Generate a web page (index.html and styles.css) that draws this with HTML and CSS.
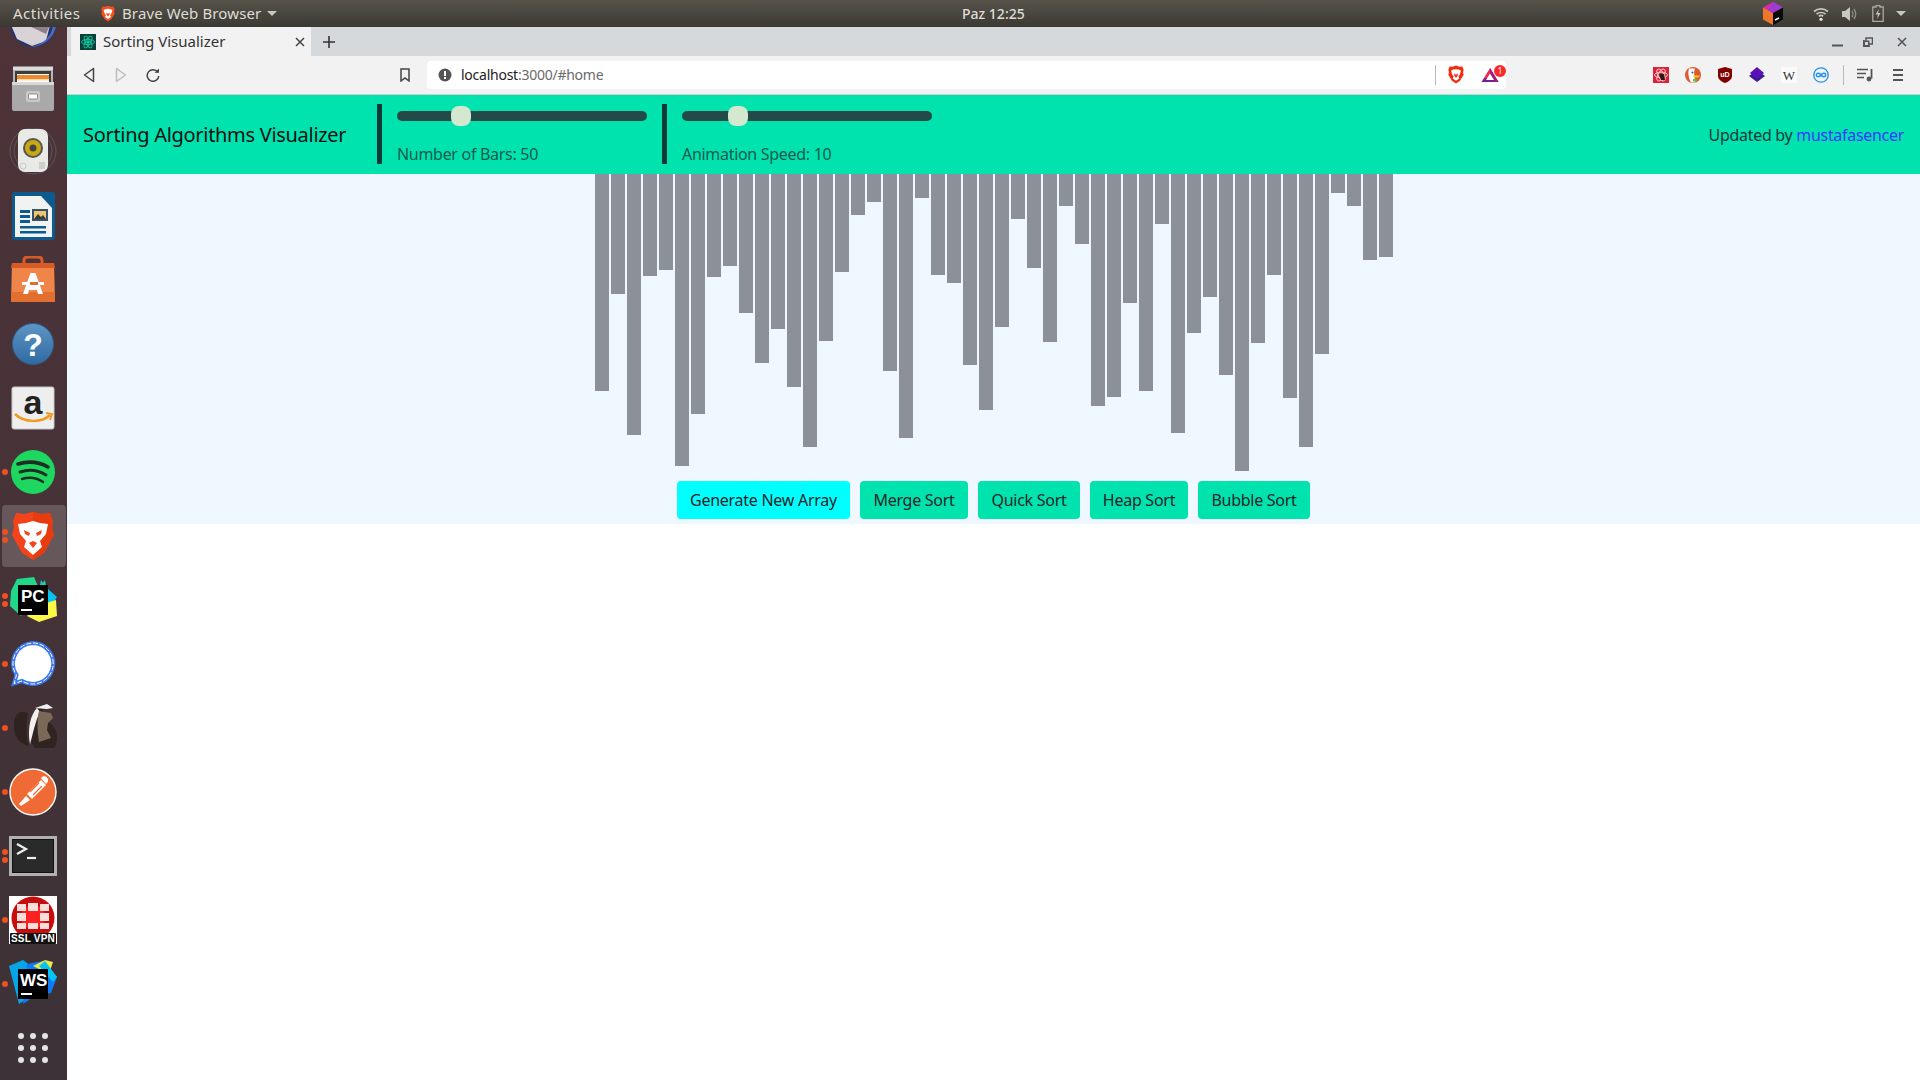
FILE: index.html
```html
<!DOCTYPE html>
<html lang="tr">
<head>
<meta charset="utf-8">
<title>Sorting Visualizer</title>
<link rel="stylesheet" href="styles.css">
</head>
<body>
<header class="sysbar">
  <span class="sys-activities">Activities</span>
  <svg class="sys-brave" width="14" height="17" viewBox="0 0 48 56"><path d="M24 1 34 5 43 4 47 14 45 22 47 29 36 47 24 55 12 47 1 29 3 22 1 14 5 4 14 5Z" fill="#f4511e"/><path d="M24 12 32 13 39 16 36 27 31 33 34 40 24 47 14 40 17 33 12 27 9 16 16 13Z" fill="#fff"/><path d="M18 24 22 28 26 28 30 24 29 32 24 38 19 32Z" fill="#f4511e"/></svg>
  <span class="sys-app">Brave Web Browser</span>
  <span class="sys-caret"></span>
  <span class="sys-clock">Paz 12:25</span>
  <svg class="sys-cube" width="20" height="23" viewBox="0 0 20 23"><path d="M10 0 20 5.5 10 11 0 5.5Z" fill="#d72ca8"/><path d="M0 5.5 10 11V23L0 17.5Z" fill="#f0762c"/><path d="M10 0 20 5.5 10 11 5 8Z" fill="#a03ad0"/><path d="M10 11 20 5.5V17.5L10 23Z" fill="#0a0a0a"/><path d="M12 18 16 16" stroke="#fff" stroke-width="1.4"/></svg>
  <svg class="sys-wifi" width="16" height="16" viewBox="0 0 16 16" fill="none" stroke="#c9c7c0" stroke-width="1.7"><path d="M1 5.5C5 2 11 2 15 5.5"/><path d="M3.5 8C6 6 10 6 12.5 8"/><path d="M5.8 10.3C7 9.4 9 9.4 10.2 10.3"/><circle cx="8" cy="13.3" r="1.6" fill="#e4e2dc" stroke="none"/></svg>
  <svg class="sys-vol" width="17" height="16" viewBox="0 0 17 16" fill="none"><path d="M1 5H4L9 1V15L4 11H1Z" fill="#c9c7c0"/><path d="M11 5C12 6.5 12 9.5 11 11M13 3C15 6 15 10 13 13" stroke="#8f8d86" stroke-width="1.4"/></svg>
  <svg class="sys-batt" width="12" height="17" viewBox="0 0 12 17" fill="none"><path d="M4 .5H8V2H11.2V16.4H.8V2H4Z" stroke="#aaa8a1" stroke-width="1.3"/><path d="M7 4 3.5 9.5H6L5 14 8.5 8H6Z" fill="#c9c7c0"/></svg>
  <span class="sys-caret sys-caret-end"></span>
</header>

<div class="desktop">
  <nav class="dock">
    <div class="dock-item"><svg width="48" height="48" viewBox="0 0 48 48"><circle cx="24" cy="24" r="23" fill="#26346f"/><path d="M2 25H41L37 41 23 46 8 39Z" fill="#d9d2d6"/><path d="M18 25H41L37 34Z" fill="#8e7f8a"/><path d="M44 25C43 36 34 45 22 47 33 47 46 38 47 25Z" fill="#4a6cc0"/></svg></div>
    <div class="dock-item"><svg width="48" height="48" viewBox="0 0 48 48"><path d="M4 3H44V44H4Z" fill="#b5b5b5"/><path d="M4 2.500H44V6H4Z" fill="#dcdcdc"/><path d="M6 7H42V18H6Z" fill="#3c3c3c"/><path d="M8 10H40V18H8Z" fill="#fff"/><path d="M8 11H40V15H8Z" fill="#ef8a2d"/><path d="M8 15H40V16.500H8Z" fill="#fbd9a6"/><path d="M3 19H45V45C45 46 44 47 43 47H5C4 47 3 46 3 45Z" fill="#a9a9a9"/><path d="M3 18H45V21H3Z" fill="#d8d8d8"/><rect x="17" y="27" width="14" height="11" rx="2" fill="#c9c9c9"/><rect x="19.500" y="30" width="9" height="5" rx="1" fill="#fff" stroke="#666" stroke-width=".7"/></svg></div>
    <div class="dock-item"><svg width="48" height="48" viewBox="0 0 48 48" fill="none"><circle cx="24" cy="23" r="23" stroke="#5b5560" stroke-width="1"/><circle cx="24" cy="23" r="19" stroke="#5b5560" stroke-width="1"/><rect x="9" y="1" width="30" height="43" rx="7" fill="#e9e9e5"/><circle cx="24" cy="20" r="10" fill="#555"/><circle cx="24" cy="20" r="8" fill="#c9a912"/><circle cx="24" cy="20" r="3.500" fill="#444"/><circle cx="14" cy="38" r="3" stroke="#c9c9c5"/><path d="M30 34H36V41H30Z" fill="#cfcfca"/></svg></div>
    <div class="dock-item"><svg width="48" height="48" viewBox="0 0 48 48"><path d="M6 0H44C45 0 46 1 46 2V44C46 47 45 48 42 48H6C4 48 3 47 3 45V3C3 1 4 0 6 0Z" fill="#0c5a8e"/><path d="M6 4H32L43 16V45H6Z" fill="#f1f2f2"/><path d="M33 1H45V14Z" fill="#0c5a8e"/><path d="M11 18H21V21H11ZM11 23H21V26H11ZM11 28H21V31H11ZM11 34H37V36.500H11ZM11 39H37V41.500H11Z" fill="#0c5a8e"/><path d="M23 17H39V29H23Z" fill="#36536b"/><path d="M25 19H37V27H25Z" fill="#eec96a"/><path d="M25 27 29 22 32 25 34 23 37 27Z" fill="#3b3b3b"/></svg></div>
    <div class="dock-item"><svg width="48" height="48" viewBox="0 0 48 48"><path d="M3 7H45L46 46H2Z" fill="#ef8548"/><path d="M2 36H46V46H2Z" fill="#e26f30"/><path d="M3 7H45L46 12H2Z" fill="#d85b26"/><path d="M15 11V4C15 2 17 1 19 1H29C31 1 33 2 33 4V11" fill="none" stroke="#d85b26" stroke-width="3"/><path d="M21.500 17H26.500L34 38H29L28 34H20L19 38H14Z" fill="#fff"/><path d="M13 26H35V29H13Z" fill="#fff"/><path d="M21 26H29V29H21Z" fill="#e26f30"/></svg></div>
    <div class="dock-item"><svg width="48" height="48" viewBox="0 0 48 48"><defs><linearGradient id="helpfill" x1="0" y1="0" x2="0" y2="1"><stop offset="0" stop-color="#5e95c6"/><stop offset="1" stop-color="#2f6aa0"/></linearGradient></defs><circle cx="24" cy="24" r="20.500" fill="url(#helpfill)" stroke="#2d5f90" stroke-width="1"/><text class="dock-help" x="24" y="36" text-anchor="middle">?</text></svg></div>
    <div class="dock-item"><svg width="48" height="48" viewBox="0 0 48 48"><rect x="3" y="3" width="42" height="42" rx="2" fill="#eeeeee" stroke="#c8c8c8"/><text class="dock-amazon" x="24" y="30" text-anchor="middle">a</text><path d="M6 30C15 39 33 39 41 31" fill="none" stroke="#f29a1f" stroke-width="2.500"/><path d="M37 29 43 30 41 36" fill="none" stroke="#f29a1f" stroke-width="2"/></svg></div>
    <div class="dock-item"><span class="run-dot"></span><svg width="48" height="48" viewBox="0 0 48 48" fill="none" stroke="#1f2d22" stroke-linecap="round"><circle cx="24" cy="24" r="22" fill="#1ed760" stroke="none"/><path d="M9 16C19 13 30 14 39 19" stroke-width="3.600"/><path d="M11 24C20 21 29 22 37 27" stroke-width="3"/><path d="M13 31C20 29 28 30 34 34" stroke-width="2.500"/></svg></div>
    <div class="dock-item dock-active"><span class="run-dot run-dot-a"></span><span class="run-dot run-dot-b"></span><svg width="48" height="48" viewBox="0 0 48 48"><path d="M24 0 33 2 41 1 44 9 43 16 45 23 35 41 24 48 13 41 3 23 5 16 4 9 7 1 15 2Z" fill="#f4421a"/><path d="M24 48 35 41 45 23 43 16 44 9 41 1 33 2 24 0Z" fill="#e73c10"/><path d="M24 9 31 11 39 12 37 22 31 29 33 35 24 43 15 35 17 29 11 22 9 12 17 11Z" fill="#fff"/><path d="M15 18 21 21 20 24 16 22ZM33 18 27 21 28 24 32 22ZM20 31 24 29 28 31 24 36Z" fill="#f4421a"/></svg></div>
    <div class="dock-item"><span class="run-dot run-dot-a"></span><span class="run-dot run-dot-b"></span><svg width="48" height="48" viewBox="0 0 48 48"><path d="M8 3 25 1 31 15 12 40 1 30 2 15Z" fill="#21d789"/><path d="M32 4 40 14 48 21 40 34 29 18Z" fill="#07c3f2"/><path d="M30 12 36 4 40 30 22 28Z" fill="#21d789"/><path d="M28 30 47 24 48 40 30 46 18 40Z" fill="#fcf84a"/><rect x="9" y="9" width="30" height="30" fill="#000"/><text class="dock-jb" x="12" y="26">PC</text><rect x="12" y="33" width="11" height="2" fill="#fff"/></svg></div>
    <div class="dock-item"><span class="run-dot"></span><svg width="48" height="48" viewBox="0 0 48 48" fill="none"><path d="M24 3A20.500 20.500 0 1 1 13 41L5 43.500 7.500 35A20.500 20.500 0 0 1 24 3Z" fill="#fff" stroke="#3a76f0" stroke-width="4"/><path d="M24 3A20.500 20.500 0 1 1 13 41L5 43.500 7.500 35A20.500 20.500 0 0 1 24 3Z" stroke="#fff" stroke-width="1" stroke-dasharray="5 1.800"/></svg></div>
    <div class="dock-item"><span class="run-dot"></span><svg width="48" height="48" viewBox="0 0 48 48"><path d="M13 8C5 8 4 20 6 30 8 36 14 41 20 42 16 30 18 16 19 10 17 8 15 8 13 8Z" fill="#30231f"/><path d="M33 4C25 4 22 12 22 22 19 30 21 38 26 44H46L48 36C49 28 45 22 40 18Z" fill="#2f2420"/><path d="M28 4C22 10 18 24 21 40 24 30 26 18 31 8Z" fill="#f1f0ee"/><path d="M30 7 42 9 44 14 39 19 38 26 42 34 30 38C28 26 28 14 30 7Z" fill="#7a6958"/><path d="M26 4 38 0 44 4 38 5Z" fill="#f2f2f2"/></svg></div>
    <div class="dock-item"><span class="run-dot"></span><svg width="48" height="48" viewBox="0 0 48 48"><circle cx="24" cy="24" r="23" fill="#f06a35" stroke="#fff" stroke-width="1.400"/><path d="M10 36 17 28 21 32 12 38Z" fill="#fff"/><path d="M18 26 32 12 37 17 23 31Z" fill="#fff"/><path d="M32 10C34 7 39 8 39 12 39 14 38 15 37 16Z" fill="#fff"/><path d="M21 24 30 15M24 27 33 18" stroke="#f06a35" stroke-width="1.200"/></svg></div>
    <div class="dock-item"><span class="run-dot run-dot-a"></span><span class="run-dot run-dot-b"></span><svg width="48" height="48" viewBox="0 0 48 48" fill="none"><rect x="1.500" y="5.500" width="45" height="37" fill="#2d2d2d" stroke="#b0b0b0" stroke-width="3"/><rect x="3.500" y="7.500" width="41" height="33" fill="#2a2a2a" stroke="#111" stroke-width="1"/><path d="M8 12 17 17 8 22" stroke="#eee" stroke-width="2.200"/><path d="M18 26H27" stroke="#eee" stroke-width="2.200"/></svg></div>
    <div class="dock-item"><span class="run-dot"></span><svg width="48" height="48" viewBox="0 0 48 48"><rect width="48" height="48" fill="#fff"/><circle cx="24" cy="22" r="21.500" fill="#c80d0d"/><circle cx="24" cy="21" r="12" fill="#ff2020"/><path d="M8 8H17V15H8ZM19 7H29V15H19ZM31 8H40V15H31ZM8 17H17V25H8ZM31 17H40V25H31ZM8 27H17V33H8ZM19 27H29V33H19ZM31 27H40V33H31Z" fill="#f9dedb"/><rect x="1" y="37" width="46" height="11" rx="1" fill="#111"/><text class="dock-ssl" x="24" y="46.300" text-anchor="middle">SSL VPN</text></svg></div>
    <div class="dock-item"><span class="run-dot"></span><svg width="48" height="48" viewBox="0 0 48 48"><path d="M0 6 14 0 22 6 16 40 10 44Z" fill="#07a5e8"/><path d="M18 4 34 1 48 17 42 33 26 36 14 44Z" fill="#0d7bf7"/><path d="M24 6 36 0 44 2 40 14Z" fill="#e9e94a"/><path d="M36 1 48 17 44 22 30 6Z" fill="#07c3f2"/><rect x="9" y="9" width="30" height="30" fill="#000"/><text class="dock-jb" x="11" y="26">WS</text><rect x="12" y="33" width="11" height="2" fill="#fff"/></svg></div>
    <div class="dock-item"><svg width="48" height="48" viewBox="0 0 48 48" fill="#e6e3e3"><circle cx="12" cy="12" r="3"/><circle cx="24" cy="12" r="3"/><circle cx="36" cy="12" r="3"/><circle cx="12" cy="24" r="3"/><circle cx="24" cy="24" r="3"/><circle cx="36" cy="24" r="3"/><circle cx="12" cy="36" r="3"/><circle cx="24" cy="36" r="3"/><circle cx="36" cy="36" r="3"/></svg></div>
  </nav>

  <div class="browser">
    <div class="tabstrip">
      <div class="tab">
        <svg width="16" height="16" viewBox="0 0 16 16" fill="none" stroke="#12c99b" stroke-width=".9"><rect width="16" height="16" fill="#0b3f3c" stroke="none"/><ellipse cx="8" cy="8" rx="6.500" ry="2.600"/><ellipse cx="8" cy="8" rx="6.500" ry="2.600" transform="rotate(60 8 8)"/><ellipse cx="8" cy="8" rx="6.500" ry="2.600" transform="rotate(120 8 8)"/><circle cx="8" cy="8" r="1.300" fill="#12c99b"/></svg>
        <span class="tab-title">Sorting Visualizer</span>
        <svg class="tab-close" width="10" height="10" viewBox="0 0 10 10"><path d="M1 1 9 9M9 1 1 9" stroke="#444" stroke-width="1.500"/></svg>
      </div>
      <svg class="tab-new" width="12" height="12" viewBox="0 0 12 12"><path d="M6 0V12M0 6H12" stroke="#333" stroke-width="1.600"/></svg>
      <div class="winctl">
        <svg width="11" height="10" viewBox="0 0 11 10"><path d="M0 8.500H11" stroke="#555" stroke-width="2"/></svg>
        <svg class="win-restore" width="10" height="10" viewBox="0 0 10 10" fill="none"><path d="M3 1H9.500V7H3Z" stroke="#555" stroke-width="1.500"/><path d="M.8 3V9.200H7" stroke="#555" stroke-width="1.500"/><rect x=".5" y="3.500" width="6" height="6" fill="#555"/><rect x="2" y="5" width="3" height="3" fill="#d5d9dc"/></svg>
        <svg width="10" height="10" viewBox="0 0 10 10"><path d="M1 1 9 9M9 1 1 9" stroke="#555" stroke-width="1.600"/></svg>
      </div>
    </div>

    <div class="toolbar">
      <span class="tool"><svg width="12" height="16" viewBox="0 0 12 16" fill="none"><path d="M10.500 1.500V14.500L1.500 8Z" stroke="#444" stroke-width="1.500" stroke-linejoin="round"/></svg></span>
      <span class="tool"><svg width="12" height="16" viewBox="0 0 12 16" fill="none"><path d="M1.500 1.500V14.500L10.500 8Z" stroke="#bcbcbc" stroke-width="1.500" stroke-linejoin="round"/></svg></span>
      <span class="tool"><svg width="14" height="14" viewBox="0 0 14 14" fill="none"><path d="M11.800 4.200A5.800 5.800 0 1 0 12.800 8" stroke="#444" stroke-width="1.500"/><path d="M8.500 4.800H13V.5Z" fill="#444"/></svg></span>
      <span class="tool tool-bookmark"><svg width="10" height="14" viewBox="0 0 10 14" fill="none"><path d="M1 1H9V13L5 10 1 13Z" stroke="#444" stroke-width="1.500"/></svg></span>
      <div class="urlbar">
        <svg width="14" height="14" viewBox="0 0 14 14"><circle cx="7" cy="7" r="6.500" fill="#555"/><rect x="6" y="3" width="2" height="5" fill="#fff"/><rect x="6" y="9" width="2" height="2" fill="#fff"/></svg>
        <span class="url-text"><span class="url-host">localhost</span>:3000/#home</span>
        <span class="url-sep"></span>
        <svg class="url-brave" width="16" height="19" viewBox="0 0 48 56"><path d="M24 1 34 5 43 4 47 14 45 22 47 29 36 47 24 55 12 47 1 29 3 22 1 14 5 4 14 5Z" fill="#f5290f"/><path d="M24 12 32 13 39 16 36 27 31 33 34 40 24 47 14 40 17 33 12 27 9 16 16 13Z" fill="#fff"/><path d="M18 24 22 28 26 28 30 24 29 32 24 38 19 32Z" fill="#f5290f"/></svg>
        <span class="url-bat">
          <svg width="18" height="16" viewBox="0 0 18 16"><path d="M9 1 17.500 15H.5Z" fill="#f02a4f"/><path d="M.5 15H17.500L14 11H4Z" fill="#6e1f9a"/><path d="M9 1 17.500 15H13L9 7Z" fill="#a01a7a"/><path d="M9 6.500 13 13H5Z" fill="#fff"/></svg>
          <span class="bat-badge">1</span>
        </span>
      </div>
      <div class="exts">
        <span class="ext"><svg width="16" height="16" viewBox="0 0 16 16" fill="none"><rect width="16" height="16" fill="#dc2036"/><ellipse cx="8" cy="8" rx="6.500" ry="2.800" stroke="#f9c4c9"/><ellipse cx="8" cy="8" rx="6.500" ry="2.800" stroke="#f9c4c9" transform="rotate(60 8 8)"/><ellipse cx="8" cy="8" rx="6.500" ry="2.800" stroke="#f9c4c9" transform="rotate(120 8 8)"/><path d="M6 7H11L12 13H8Z" fill="#2a1a1a"/></svg></span>
        <span class="ext"><svg width="16" height="16" viewBox="0 0 16 16"><circle cx="8" cy="8" r="8" fill="#de5833"/><path d="M4 1.500C3 5 3 10 6 15.500H10.500L9.500 9.500C9 6 9 4 10 1.500Z" fill="#fff"/><path d="M8 8.500H15L13.500 10.500H9Z" fill="#fdd20a"/><path d="M8 12H12V14.500H8Z" fill="#65bc46"/><circle cx="7.500" cy="5.500" r="1" fill="#2d4f8e"/></svg></span>
        <span class="ext"><svg width="14" height="16" viewBox="0 0 14 16"><path d="M0 2 7 0 14 2V9C14 12 11 14.500 7 16 3 14.500 0 12 0 9Z" fill="#800000"/><text class="ext-ub" x="7" y="10" text-anchor="middle">uD</text></svg></span>
        <span class="ext"><svg width="16" height="16" viewBox="0 0 16 16"><path d="M8 3 16 9 8 15 0 9Z" fill="#3c1a90"/><path d="M8 0 15 6 8 12 1 6Z" fill="#5a10b8"/></svg></span>
        <span class="ext"><span class="ext-wiki">W</span></span>
        <span class="ext"><svg width="16" height="16" viewBox="0 0 16 16" fill="none" stroke="#1e90f0"><circle cx="8" cy="8" r="7.200" stroke-width="1.300"/><path d="M8 8C6.500 5.800 3.300 5.800 3.300 8S6.500 10.200 8 8C9.500 5.800 12.700 5.800 12.700 8S9.500 10.200 8 8Z" stroke-width="1.500"/></svg></span>
      </div>
      <span class="tool-sep"></span>
      <span class="tool tool-queue"><svg width="16" height="14" viewBox="0 0 16 14" fill="none" stroke="#555" stroke-width="1.500"><path d="M0 1.500H11M0 5.500H9M0 9.500H7"/><path d="M14.500 1V10.500" stroke-width="1.800"/><circle cx="12" cy="11" r="2.400" fill="#555" stroke="none"/></svg></span>
      <span class="tool tool-menu"><svg width="10" height="12" viewBox="0 0 10 12"><path d="M0 1H10M0 6H10M0 11H10" stroke="#555" stroke-width="1.800"/></svg></span>
    </div>

    <main class="page">
      <div class="navbar">
        <span class="brand">Sorting Algorithms Visualizer</span>
        <div class="control control-bars">
          <div class="track"><span class="thumb thumb-bars"></span></div>
          <label class="control-label">Number of Bars: 50</label>
        </div>
        <div class="control control-speed">
          <div class="track"><span class="thumb thumb-speed"></span></div>
          <label class="control-label">Animation Speed: 10</label>
        </div>
        <span class="credit">Updated by <a class="credit-link" href="#home">mustafasencer</a></span>
      </div>
      <section class="stage">
        <div class="bars">
          <div class="bar" style="height:217px"></div><div class="bar" style="height:120px"></div><div class="bar" style="height:261px"></div><div class="bar" style="height:102px"></div><div class="bar" style="height:96px"></div>
          <div class="bar" style="height:292px"></div><div class="bar" style="height:240px"></div><div class="bar" style="height:103px"></div><div class="bar" style="height:92px"></div><div class="bar" style="height:139px"></div>
          <div class="bar" style="height:189px"></div><div class="bar" style="height:155px"></div><div class="bar" style="height:213px"></div><div class="bar" style="height:273px"></div><div class="bar" style="height:167px"></div>
          <div class="bar" style="height:98px"></div><div class="bar" style="height:41px"></div><div class="bar" style="height:28px"></div><div class="bar" style="height:197px"></div><div class="bar" style="height:264px"></div>
          <div class="bar" style="height:24px"></div><div class="bar" style="height:101px"></div><div class="bar" style="height:109px"></div><div class="bar" style="height:191px"></div><div class="bar" style="height:236px"></div>
          <div class="bar" style="height:153px"></div><div class="bar" style="height:45px"></div><div class="bar" style="height:94px"></div><div class="bar" style="height:168px"></div><div class="bar" style="height:32px"></div>
          <div class="bar" style="height:70px"></div><div class="bar" style="height:232px"></div><div class="bar" style="height:223px"></div><div class="bar" style="height:129px"></div><div class="bar" style="height:217px"></div>
          <div class="bar" style="height:50px"></div><div class="bar" style="height:259px"></div><div class="bar" style="height:159px"></div><div class="bar" style="height:123px"></div><div class="bar" style="height:201px"></div>
          <div class="bar" style="height:297px"></div><div class="bar" style="height:169px"></div><div class="bar" style="height:101px"></div><div class="bar" style="height:224px"></div><div class="bar" style="height:273px"></div>
          <div class="bar" style="height:180px"></div><div class="bar" style="height:19px"></div><div class="bar" style="height:32px"></div><div class="bar" style="height:86px"></div><div class="bar" style="height:83px"></div>
        </div>
        <div class="actions">
          <button class="btn btn-generate">Generate New Array</button>
          <button class="btn btn-merge">Merge Sort</button>
          <button class="btn btn-quick">Quick Sort</button>
          <button class="btn btn-heap">Heap Sort</button>
          <button class="btn btn-bubble">Bubble Sort</button>
        </div>
      </section>
    </main>
  </div>
</div>
</body>
</html>
```
FILE: styles.css
```css
* { box-sizing: border-box; }
html, body { margin: 0; padding: 0; height: 100%; overflow: hidden; }
body { font-family: "Noto Sans", sans-serif; background: #fff; color: #212529; display: flex; flex-direction: column; height: 1080px; }

/* system bar */
.sysbar { flex: none; height: 27px; display: flex; align-items: center; background: linear-gradient(#57534b, #3b3933); color: #dfdcd6; font-size: 15px; padding-left: 13px; }
.sys-activities { width: 88px; margin-bottom: 2px; letter-spacing: .5px; }
.sys-brave { flex: none; }
.sys-app { margin-left: 7px; width: 145px; margin-bottom: 2px; letter-spacing: .12px; white-space: nowrap; }
.sys-caret { width: 0; height: 0; border-left: 5px solid transparent; border-right: 5px solid transparent; border-top: 5px solid #c9c7c0; }
.sys-clock { margin-left: 685px; width: 63px; font-size: 14px; font-weight: 500; white-space: nowrap; }
.sys-cube { margin-left: 738px; flex: none; }
.sys-wifi { margin-left: 30px; flex: none; }
.sys-vol { margin-left: 12px; flex: none; }
.sys-batt { margin-left: 14px; flex: none; }
.sys-caret-end { margin-left: 12px; }

/* desktop */
.desktop { flex: 1; display: flex; min-height: 0; }
.dock { flex: none; width: 67px; display: flex; flex-direction: column; justify-content: flex-end; padding-bottom: 1px; overflow: hidden; background: linear-gradient(#4e3338, #3c3237); }
.dock-item { position: relative; flex: none; height: 64px; display: flex; align-items: center; justify-content: center; padding: 2px 2px 0 0; }
.dock-active { height: 62px; margin: 2px 1px 0 2px; padding-top: 0; border-radius: 4px; background: rgba(255,255,255,.18); }
.run-dot { position: absolute; left: 2px; top: 30px; width: 6px; height: 6px; border-radius: 50%; background: #ee5020; }
.run-dot-a { top: 26px; }
.run-dot-b { top: 34px; }
.dock-active .run-dot { left: 0; }
.dock-active .run-dot-a { top: 24px; }
.dock-active .run-dot-b { top: 32px; }
.dock-help { font: 700 32px "Liberation Sans", sans-serif; fill: #fff; }
.dock-amazon { font: 700 34px "Liberation Sans", sans-serif; fill: #222; }
.dock-jb { font: 700 17px "Liberation Sans", sans-serif; fill: #fff; }
.dock-ssl { font: 700 10px "Liberation Sans", sans-serif; letter-spacing: .2px; fill: #fff; }

/* browser */
.browser { flex: 1; min-width: 0; display: flex; flex-direction: column; }
.tabstrip { flex: none; height: 29px; display: flex; align-items: center; background: #d5d9dc; padding-left: 4px; }
.tab { width: 240px; height: 29px; display: flex; align-items: center; background: #f2f2f2; padding-left: 9px; }
.tab-title { margin: 0 0 1px 7px; font-size: 15px; color: #333; white-space: nowrap; width: 192px; }
.tab-close { flex: none; }
.tab-new { margin-left: 12px; flex: none; }
.winctl { margin-left: auto; display: flex; align-items: center; gap: 21.500px; padding-right: 13px; }
.win-restore { margin: 0 2.400px 0 -1.200px; }

.toolbar { flex: none; height: 39px; display: flex; align-items: center; background: #f2f2f2; border-bottom: 1px solid #cfcfcf; padding: 0 0 1px 6px; }
.tool { flex: none; width: 32px; height: 28px; display: flex; align-items: center; justify-content: center; }
.tool-bookmark { margin-left: 220px; }
.urlbar { flex: none; width: 1079px; height: 28px; margin-left: 6px; background: #fff; border-radius: 4px; display: flex; align-items: center; padding-left: 11px; }
.url-text { margin-left: 9px; font-size: 14px; letter-spacing: -.25px; color: #6b6b6b; width: 974px; white-space: nowrap; }
.url-host { color: #222; }
.url-sep { flex: none; width: 1px; height: 20px; background: #b9b9b9; }
.url-brave { margin-left: 12px; flex: none; }
.url-bat { position: relative; margin-left: 17px; display: flex; }
.bat-badge { position: absolute; left: 13px; top: -2px; width: 12px; height: 12px; border-radius: 50%; background: #fb2a2a; color: #fff; font-size: 8px; line-height: 12px; text-align: center; }
.exts { flex: none; margin-left: 139px; display: flex; }
.ext { flex: none; width: 32px; height: 28px; display: flex; align-items: center; justify-content: center; }
.ext-ub { font: 700 7px "Liberation Sans", sans-serif; fill: #fff; }
.ext-wiki { width: 16px; height: 16px; background: #fafafa; text-align: center; font: 13px/17px "Liberation Serif", serif; color: #333; }
.tool-sep { flex: none; width: 1px; height: 20px; margin-left: 6px; background: #b9b9b9; }
.tool-queue { margin-left: 5px; }
.tool-menu { margin-left: 1px; }

/* page */
.page { flex: none; height: 429px; display: flex; flex-direction: column; background: #f0f8ff; }
.navbar { flex: none; height: 79px; display: flex; align-items: flex-start; background: #00e3ae; padding-left: 16px; }
.brand { width: 294px; margin-top: 27px; font-size: 20px; line-height: 26px; letter-spacing: -.3px; color: #111; white-space: nowrap; }
.control { height: 60px; margin-top: 9px; border-left: 5px solid #0b3a38; padding: 7px 0 0 15px; display: flex; flex-direction: column; }
.control-bars { width: 285px; }
.control-speed { width: 270px; }
.track { position: relative; flex: none; width: 250px; height: 10px; border-radius: 5px; background: #234a47; }
.thumb { position: absolute; top: -5px; width: 20px; height: 20px; border-radius: 8px; background: #d4e8d0; }
.thumb-bars { left: 54px; }
.thumb-speed { left: 46px; }
.control-label { flex: none; margin-top: 21px; font-size: 16px; line-height: 24px; letter-spacing: -.3px; color: #155a50; white-space: nowrap; }
.credit { margin-left: auto; margin-top: 27px; padding-right: 16px; font-size: 16px; line-height: 26px; letter-spacing: -.3px; color: #173a37; white-space: nowrap; }
.credit-link { color: #3a3aff; text-decoration: none; }

.stage { flex: 1; display: flex; flex-direction: column; align-items: center; }
.bars { height: 307px; display: flex; align-items: flex-start; gap: 2px; }
.bar { width: 14px; background: #8c9199; }
.actions { display: flex; gap: 10px; }
.btn { height: 38px; padding: 0; border: 0; border-radius: 4px; font-family: "Noto Sans", sans-serif; font-size: 16px; letter-spacing: -.27px; color: #212529; text-align: center; white-space: nowrap; background: #00e3ae; }
.btn-generate { width: 173px; background: #00ffff; }
.btn-merge { width: 108px; }
.btn-quick { width: 102px; }
.btn-heap { width: 98px; }
.btn-bubble { width: 112px; }
```
